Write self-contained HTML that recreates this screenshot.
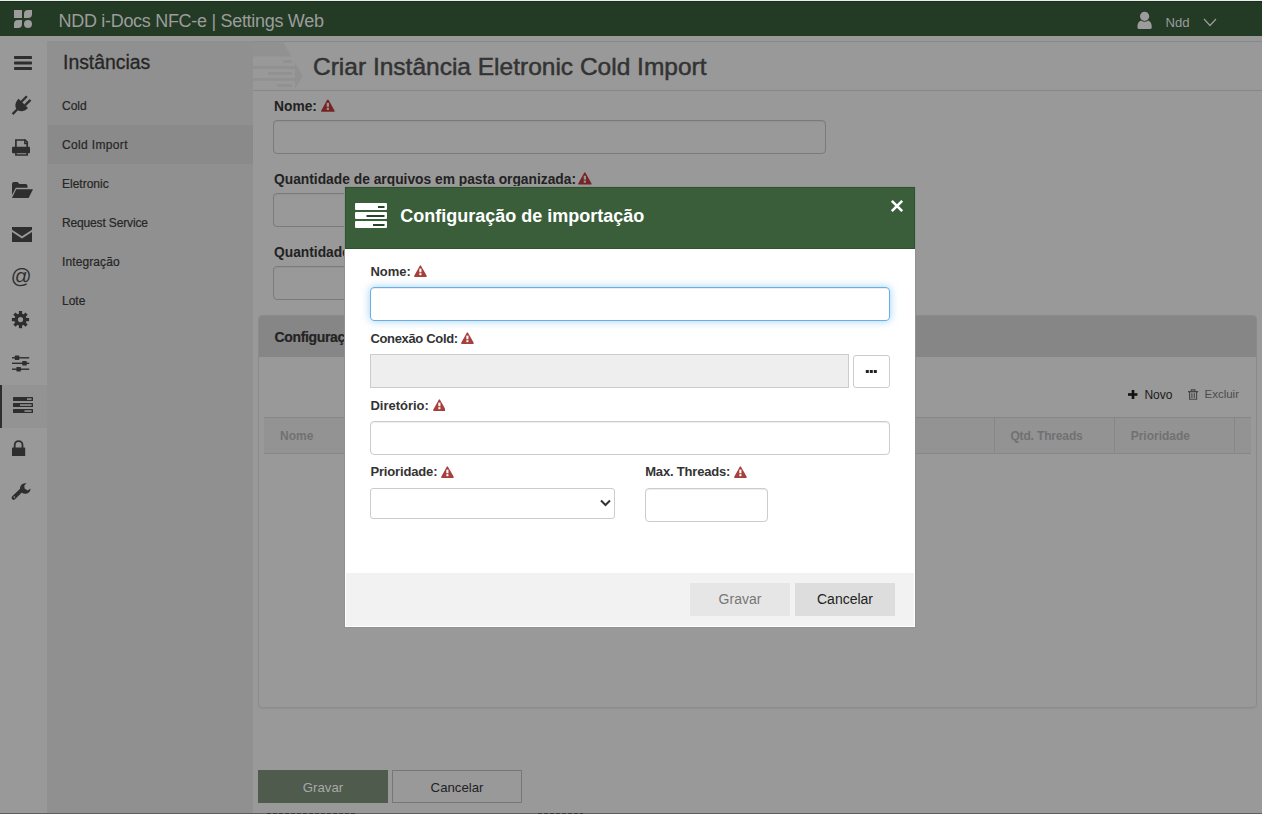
<!DOCTYPE html>
<html><head><meta charset="utf-8">
<style>
*{box-sizing:border-box;margin:0;padding:0}
html,body{width:1262px;height:814px;overflow:hidden;background:#999;font-family:"Liberation Sans",sans-serif;position:relative}
.a{position:absolute}
.t{position:absolute;white-space:nowrap;line-height:1}
.lbl{position:absolute;white-space:nowrap;line-height:1;font-weight:bold;color:#222}
.sbi{position:absolute;white-space:nowrap;line-height:1;left:62px;font-size:12px;color:#262626;-webkit-text-stroke:0.2px #262626}
.mlbl{position:absolute;white-space:nowrap;line-height:1;font-weight:bold;font-size:13px;color:#333}
</style></head><body>
<!-- base regions -->
<div class="a" style="left:0;top:0;width:1262px;height:1px;background:#ececef"></div>
<div class="a" style="left:0;top:1px;width:1262px;height:35px;background:#233a24;border-top:1px solid #18301a"></div>
<div class="a" style="left:47px;top:41px;width:206px;height:773px;background:#909090"></div>
<div class="a" style="left:48px;top:125px;width:205px;height:39px;background:#8a8a8a"></div>
<div class="a" style="left:0;top:385px;width:47px;height:43px;background:#939393"></div>
<div class="a" style="left:0;top:385px;width:2px;height:43px;background:#2e2e2e"></div>
<div class="a" style="left:0;top:813px;width:1262px;height:1px;background:#5e5e5e"></div>
<div class="a" style="left:267px;top:813px;width:88px;height:1px;background:repeating-linear-gradient(90deg,#333 0 4px,#5e5e5e 4px 6px)"></div>
<div class="a" style="left:538px;top:813px;width:45px;height:1px;background:repeating-linear-gradient(90deg,#333 0 4px,#5e5e5e 4px 6px)"></div>

<!-- header content -->
<svg class="a" style="left:14px;top:10px" width="18" height="18" viewBox="0 0 18 18">
 <g fill="#9c9c9c">
  <rect x="0" y="0" width="8" height="8"/>
  <path d="M10 4 Q10 0 14 0 H18 V4 Q18 8 14 8 H10 Z"/>
  <path d="M0 14 Q0 10 4 10 H8 V14 Q8 18 4 18 H0 Z"/>
  <circle cx="14" cy="14" r="4"/>
 </g>
</svg>
<div class="t" style="left:58.5px;top:12px;font-size:18px;letter-spacing:-0.3px;color:#9c9c9c">NDD i-Docs NFC-e | Settings Web</div>
<svg class="a" style="left:1137px;top:11px" width="16" height="19" viewBox="0 0 16 19">
 <g fill="#9c9c9c"><circle cx="7.6" cy="5.3" r="4.6"/><path d="M1.8 18 Q0.4 18 0.4 16.2 Q0.4 11 4 9.6 Q7.6 12 11.2 9.6 Q14.8 11 14.8 16.2 Q14.8 18 13.4 18 Z"/></g>
</svg>
<div class="t" style="left:1165.5px;top:15.9px;font-size:13.1px;color:#9c9c9c">Ndd</div>
<svg class="a" style="left:1203px;top:18px" width="14" height="9" viewBox="0 0 14 9">
 <path d="M1 1 L7 7.5 L13 1" fill="none" stroke="#9c9c9c" stroke-width="1.2"/>
</svg>

<!-- icon bar -->
<svg class="a" style="left:0;top:0" width="47" height="520" viewBox="0 0 47 520">
 <g fill="#2e2e2e">
  <rect x="14" y="56" width="18" height="3" rx="0.8"/>
  <rect x="14" y="61.5" width="18" height="3" rx="0.8"/>
  <rect x="14" y="67" width="18" height="3" rx="0.8"/>
  <!-- plug -->
  <g transform="translate(23.3,103.4) rotate(45)">
   <path d="M-6.6 0 H6.6 C6.6 5 4 8.8 0 8.8 C-4 8.8 -6.6 5 -6.6 0 Z"/>
   <rect x="-3.7" y="-7.6" width="2.3" height="7.8"/>
   <rect x="1.4" y="-7.6" width="2.3" height="7.8"/>
   <rect x="-1.15" y="8" width="2.3" height="7.2"/>
  </g>
  <!-- printer -->
  <path d="M15.9 147 V140 H25 L27.2 142.2 V147" fill="none" stroke="#2e2e2e" stroke-width="1.7"/>
  <path d="M24.8 139.5 V143.5 H28" fill="none" stroke="#2e2e2e" stroke-width="1.4"/>
  <rect x="12" y="146.7" width="18" height="6.5" rx="1"/>
  <path d="M15.9 152 V155 H27.2 V152" fill="none" stroke="#2e2e2e" stroke-width="1.6"/>
  <!-- folder open -->
  <path d="M12 184 Q12 182 14 182 H17.5 L19.5 184 H25.5 Q27.5 184 27.5 186 V187.8 H15.8 L12 195 Z"/>
  <path d="M16.2 189.3 H33 L28.6 198 H12 Z"/>
  <!-- envelope -->
  <path d="M12 227 H32 V229.8 L22 236.2 L12 229.8 Z"/>
  <path d="M12 232 L22 238.4 L32 232 V242 H12 Z"/>
  <!-- at -->
  <text x="10.8" y="283.3" font-family="Liberation Sans" font-size="20.5" fill="#2e2e2e">@</text>
  <!-- gear -->
  <g transform="translate(20.5,319.6)">
   <g id="teeth">
    <rect x="-1.6" y="-8.6" width="3.2" height="17.2"/>
    <rect x="-1.6" y="-8.6" width="3.2" height="17.2" transform="rotate(45)"/>
    <rect x="-1.6" y="-8.6" width="3.2" height="17.2" transform="rotate(90)"/>
    <rect x="-1.6" y="-8.6" width="3.2" height="17.2" transform="rotate(135)"/>
   </g>
   <circle r="6.2"/>
   <circle r="2.6" fill="#999"/>
  </g>
  <!-- sliders -->
  <rect x="12" y="357.1" width="17.2" height="1.4"/>
  <rect x="12" y="362.6" width="17.2" height="1.4"/>
  <rect x="12" y="368.5" width="17.2" height="1.4"/>
  <rect x="14.8" y="355.6" width="4.5" height="4.4" rx="0.6"/>
  <rect x="22.2" y="361.1" width="4.5" height="4.4" rx="0.6"/>
  <rect x="16.4" y="367" width="4.5" height="4.4" rx="0.6"/>
  <!-- server/tasks -->
  <rect x="13" y="397" width="20" height="4" rx="0.5"/>
  <rect x="13" y="403" width="20" height="4" rx="0.5"/>
  <rect x="13" y="409" width="20" height="4" rx="0.5"/>
  <rect x="27" y="398.4" width="4.6" height="1.3" fill="#a8a8a8"/>
  <rect x="20" y="404.4" width="11.6" height="1.3" fill="#a8a8a8"/>
  <rect x="24.5" y="410.4" width="7.1" height="1.3" fill="#a8a8a8"/>
  <!-- lock -->
  <path d="M14.7 448 V445 A3.9 3.9 0 0 1 22.5 445 V448" fill="none" stroke="#2e2e2e" stroke-width="1.8"/>
  <rect x="12" y="447.5" width="13.2" height="8.5" rx="0.6"/>
  <!-- wrench -->
  <path d="M13.6 497.8 L22 489.6" stroke="#2e2e2e" stroke-width="4" stroke-linecap="round"/>
  <path d="M26.5 483.3 A5.3 5.3 0 1 0 30.6 488.6 L27.6 490.5 L24.6 488.5 L24.3 485.6 Z"/>
  <circle cx="14.3" cy="497.1" r="0.8" fill="#999"/>
 </g>
</svg>

<!-- sidebar -->
<div class="t" style="left:63px;top:52.5px;font-size:19.4px;color:#262626;-webkit-text-stroke:0.3px #262626">Instâncias</div>
<div class="sbi" style="top:99.8px">Cold</div>
<div class="sbi" style="top:138.8px;letter-spacing:0.35px">Cold Import</div>
<div class="sbi" style="top:177.8px">Eletronic</div>
<div class="sbi" style="top:216.8px;letter-spacing:-0.15px">Request Service</div>
<div class="sbi" style="top:255.8px;letter-spacing:0.1px">Integração</div>
<div class="sbi" style="top:294.8px">Lote</div>

<!-- content title bar -->
<div class="a" style="left:253px;top:41px;width:1009px;height:1px;background:#878787"></div>
<div class="a" style="left:253px;top:90px;width:1009px;height:1px;background:#878787"></div>
<svg class="a" style="left:253px;top:41px" width="52" height="50" viewBox="0 0 52 50">
 <g fill="#919191">
  <path d="M0 0.5 H30 L38.4 15.6 H0 Z"/>
  <rect x="0" y="25.1" width="42" height="2.8"/>
  <rect x="0" y="37" width="42" height="2.8"/>
  <rect x="30" y="19.2" width="8.7" height="2.8"/>
  <rect x="15" y="31" width="23.7" height="2.8"/>
  <rect x="24" y="43" width="14.7" height="2.8"/>
  <path d="M42 22 L49.8 34.8 L42 47.7 Z"/>
 </g>
</svg>
<div class="t" style="left:313px;top:54.8px;font-size:24.5px;color:#333;-webkit-text-stroke:0.5px #333">Criar Instância Eletronic Cold Import</div>

<!-- main form -->
<div class="lbl" style="left:274px;top:99.5px;font-size:13.8px">Nome:</div>
<div class="lbl" style="left:274px;top:173.1px;font-size:13.8px">Quantidade de arquivos em pasta organizada:</div>
<div class="lbl" style="left:274px;top:245.5px;font-size:13.8px">Quantidade de threads em pasta organizada:</div>
<svg class="a" style="left:321px;top:99px" width="13.8" height="12.9" viewBox="0 0 13 12"><path d="M5.7 0.9 Q6.45 -0.3 7.2 0.9 L12.8 10.9 Q13.2 12 12 12 H1 Q-0.2 12 0.2 10.9 Z" fill="#782324"/><rect x="5.4" y="3.6" width="2.1" height="3.7" fill="#999"/><rect x="5.4" y="8.2" width="2.1" height="2" fill="#999"/></svg>
<svg class="a" style="left:578.3px;top:172.4px" width="13.8" height="12.6" viewBox="0 0 13 12"><path d="M5.7 0.9 Q6.45 -0.3 7.2 0.9 L12.8 10.9 Q13.2 12 12 12 H1 Q-0.2 12 0.2 10.9 Z" fill="#782324"/><rect x="5.4" y="3.6" width="2.1" height="3.7" fill="#999"/><rect x="5.4" y="8.2" width="2.1" height="2" fill="#999"/></svg>
<div class="a" style="left:273px;top:120px;width:553px;height:34px;border:1px solid #7a7a7a;border-radius:4px;box-shadow:inset 0 1px 1px rgba(0,0,0,.045)"></div>
<div class="a" style="left:273px;top:193px;width:553px;height:34px;border:1px solid #7a7a7a;border-radius:4px;box-shadow:inset 0 1px 1px rgba(0,0,0,.045)"></div>
<div class="a" style="left:273px;top:266px;width:553px;height:34px;border:1px solid #7a7a7a;border-radius:4px;box-shadow:inset 0 1px 1px rgba(0,0,0,.045)"></div>

<!-- panel -->
<div class="a" style="left:258px;top:315px;width:999px;height:393px;border:1px solid #8b8b8b;border-radius:4px;overflow:hidden;box-shadow:0 1px 1px rgba(0,0,0,.05)">
 <div class="a" style="left:0;top:0;width:997px;height:41px;background:#868686"></div>
</div>
<div class="lbl" style="left:274.5px;top:329.8px;font-size:14px;letter-spacing:-0.35px;color:#232323;-webkit-text-stroke:0.2px #232323">Configurações</div>
<svg class="a" style="left:1127.8px;top:390px" width="10" height="10" viewBox="0 0 10 10"><rect x="3.7" y="0" width="2.6" height="9" fill="#111"/><rect x="0" y="3.2" width="9.4" height="2.6" fill="#111"/></svg>
<div class="t" style="left:1144.4px;top:388.8px;font-size:12px;color:#1a1a1a">Novo</div>
<svg class="a" style="left:1188px;top:389px" width="11" height="12" viewBox="0 0 11 12"><g fill="none" stroke="#444" stroke-width="1.1"><path d="M3.3 2 V0.9 H6.9 V2"/><path d="M1.6 2.8 V10.3 H8.6 V2.8"/><path d="M3.9 4.2 V9.1 M6.3 4.2 V9.1"/></g><rect x="0" y="2" width="10.2" height="1.3" fill="#444"/></svg>
<div class="t" style="left:1204.5px;top:389.3px;font-size:11.5px;color:#4c4c4c">Excluir</div>
<!-- table header -->
<div class="a" style="left:264px;top:417px;width:987px;height:37px;background:#939393;border-top:1px solid #878787;border-bottom:1px solid #878787"></div>
<div class="a" style="left:994px;top:418px;width:1px;height:35px;background:#878787"></div>
<div class="a" style="left:1114px;top:418px;width:1px;height:35px;background:#878787"></div>
<div class="a" style="left:1234px;top:418px;width:1px;height:35px;background:#878787"></div>
<div class="t" style="left:280px;top:429.8px;font-size:12px;font-weight:bold;color:#717171">Nome</div>
<div class="t" style="left:1010.4px;top:429.8px;font-size:12px;font-weight:bold;color:#717171;letter-spacing:-0.15px">Qtd. Threads</div>
<div class="t" style="left:1130.7px;top:429.8px;font-size:12px;font-weight:bold;color:#717171">Prioridade</div>

<!-- bottom buttons -->
<div class="a" style="left:258px;top:770px;width:130px;height:33px;background:#4e5b4d"></div>
<div class="t" style="left:258px;width:130px;text-align:center;top:780.7px;font-size:13.2px;color:#a9a9a9">Gravar</div>
<div class="a" style="left:392px;top:770px;width:130px;height:33px;border:1px solid #777"></div>
<div class="t" style="left:392px;width:130px;text-align:center;top:780.7px;font-size:13.2px;color:#222">Cancelar</div>

<!-- modal -->
<div class="a" style="left:345px;top:187px;width:570px;height:440px;background:#fff;overflow:hidden;box-shadow:0 0 0 1px #929292">
 <div class="a" style="left:0;top:0;width:570px;height:62px;background:#3a5e39;border:1px solid #2d532b"></div>
 <div class="a" style="left:1px;top:386px;width:568px;height:53px;background:#f2f2f2"></div>
</div>
<svg class="a" style="left:354.5px;top:203px" width="33" height="26" viewBox="0 0 33 26">
 <g fill="#fff"><rect x="0" y="0" width="32" height="7" rx="1"/><rect x="0" y="9" width="32" height="7" rx="1"/><rect x="0" y="18" width="32" height="7" rx="1"/></g>
 <g fill="#24452a"><rect x="23" y="3" width="6.5" height="2"/><rect x="11.5" y="12" width="18" height="2"/><rect x="18" y="21" width="11.5" height="2"/></g>
</svg>
<div class="t" style="left:400.3px;top:206.6px;font-size:18px;font-weight:bold;color:#fff">Configuração de importação</div>
<svg class="a" style="left:890px;top:199px" width="14" height="14" viewBox="0 0 14 14"><path d="M1.8 1.8 L12.2 12.2 M12.2 1.8 L1.8 12.2" stroke="#fff" stroke-width="2.6"/></svg>

<div class="mlbl" style="left:370.4px;top:265.2px">Nome:</div>
<div class="mlbl" style="left:370.4px;top:332px;letter-spacing:-0.33px">Conexão Cold:</div>
<div class="mlbl" style="left:370.4px;top:399.2px">Diretório:</div>
<div class="mlbl" style="left:370.4px;top:465px;letter-spacing:-0.15px">Prioridade:</div>
<div class="mlbl" style="left:645.2px;top:465px;letter-spacing:-0.18px">Max. Threads:</div>

<svg class="a" style="left:414.2px;top:264.9px" width="12.9" height="12" viewBox="0 0 13 12"><path d="M5.7 0.9 Q6.45 -0.3 7.2 0.9 L12.8 10.9 Q13.2 12 12 12 H1 Q-0.2 12 0.2 10.9 Z" fill="#a83f3d"/><rect x="5.4" y="3.6" width="2.1" height="3.7" fill="#fff"/><rect x="5.4" y="8.2" width="2.1" height="2" fill="#fff"/></svg>
<svg class="a" style="left:461px;top:332px" width="12.9" height="12" viewBox="0 0 13 12"><path d="M5.7 0.9 Q6.45 -0.3 7.2 0.9 L12.8 10.9 Q13.2 12 12 12 H1 Q-0.2 12 0.2 10.9 Z" fill="#a83f3d"/><rect x="5.4" y="3.6" width="2.1" height="3.7" fill="#fff"/><rect x="5.4" y="8.2" width="2.1" height="2" fill="#fff"/></svg>
<svg class="a" style="left:432.5px;top:399.3px" width="12.9" height="12" viewBox="0 0 13 12"><path d="M5.7 0.9 Q6.45 -0.3 7.2 0.9 L12.8 10.9 Q13.2 12 12 12 H1 Q-0.2 12 0.2 10.9 Z" fill="#a83f3d"/><rect x="5.4" y="3.6" width="2.1" height="3.7" fill="#fff"/><rect x="5.4" y="8.2" width="2.1" height="2" fill="#fff"/></svg>
<svg class="a" style="left:440.8px;top:466.3px" width="12.9" height="12" viewBox="0 0 13 12"><path d="M5.7 0.9 Q6.45 -0.3 7.2 0.9 L12.8 10.9 Q13.2 12 12 12 H1 Q-0.2 12 0.2 10.9 Z" fill="#a83f3d"/><rect x="5.4" y="3.6" width="2.1" height="3.7" fill="#fff"/><rect x="5.4" y="8.2" width="2.1" height="2" fill="#fff"/></svg>
<svg class="a" style="left:734px;top:466.3px" width="12.9" height="12" viewBox="0 0 13 12"><path d="M5.7 0.9 Q6.45 -0.3 7.2 0.9 L12.8 10.9 Q13.2 12 12 12 H1 Q-0.2 12 0.2 10.9 Z" fill="#a83f3d"/><rect x="5.4" y="3.6" width="2.1" height="3.7" fill="#fff"/><rect x="5.4" y="8.2" width="2.1" height="2" fill="#fff"/></svg>
<div class="a" style="left:370px;top:287px;width:520px;height:34px;border:1px solid #66afe9;border-radius:4px;box-shadow:inset 0 1px 1px rgba(0,0,0,.075),0 0 8px rgba(102,175,233,.6)"></div>
<div class="a" style="left:370px;top:354px;width:479px;height:34px;border:1px solid #ccc;background:#eee"></div>
<div class="a" style="left:853px;top:355px;width:37px;height:33px;border:1px solid #ccc;border-radius:3px;background:#fff"></div>
<svg class="a" style="left:865px;top:369px" width="13" height="5" viewBox="0 0 13 5"><g fill="#222"><rect x="0.8" y="1" width="3" height="3"/><rect x="4.8" y="1" width="3" height="3"/><rect x="8.8" y="1" width="3" height="3"/></g></svg>
<div class="a" style="left:370px;top:421px;width:520px;height:34px;border:1px solid #ccc;border-radius:4px;box-shadow:inset 0 1px 1px rgba(0,0,0,.075)"></div>
<div class="a" style="left:370px;top:488px;width:245px;height:31px;border:1px solid #ccc;border-radius:3px"></div>
<svg class="a" style="left:599px;top:498px" width="13" height="10" viewBox="0 0 13 10"><path d="M2 2.5 L6.5 7 L11 2.5" fill="none" stroke="#333" stroke-width="2"/></svg>
<div class="a" style="left:645px;top:488px;width:123px;height:34px;border:1px solid #ccc;border-radius:4px;box-shadow:inset 0 1px 1px rgba(0,0,0,.075)"></div>

<div class="a" style="left:690px;top:583px;width:100px;height:33px;background:#e6e6e6"></div>
<div class="t" style="left:690px;width:100px;text-align:center;top:592.4px;font-size:14px;color:#777">Gravar</div>
<div class="a" style="left:795px;top:583px;width:100px;height:33px;background:#dddddd"></div>
<div class="t" style="left:795px;width:100px;text-align:center;top:592.4px;font-size:14px;color:#222">Cancelar</div>
</body></html>
